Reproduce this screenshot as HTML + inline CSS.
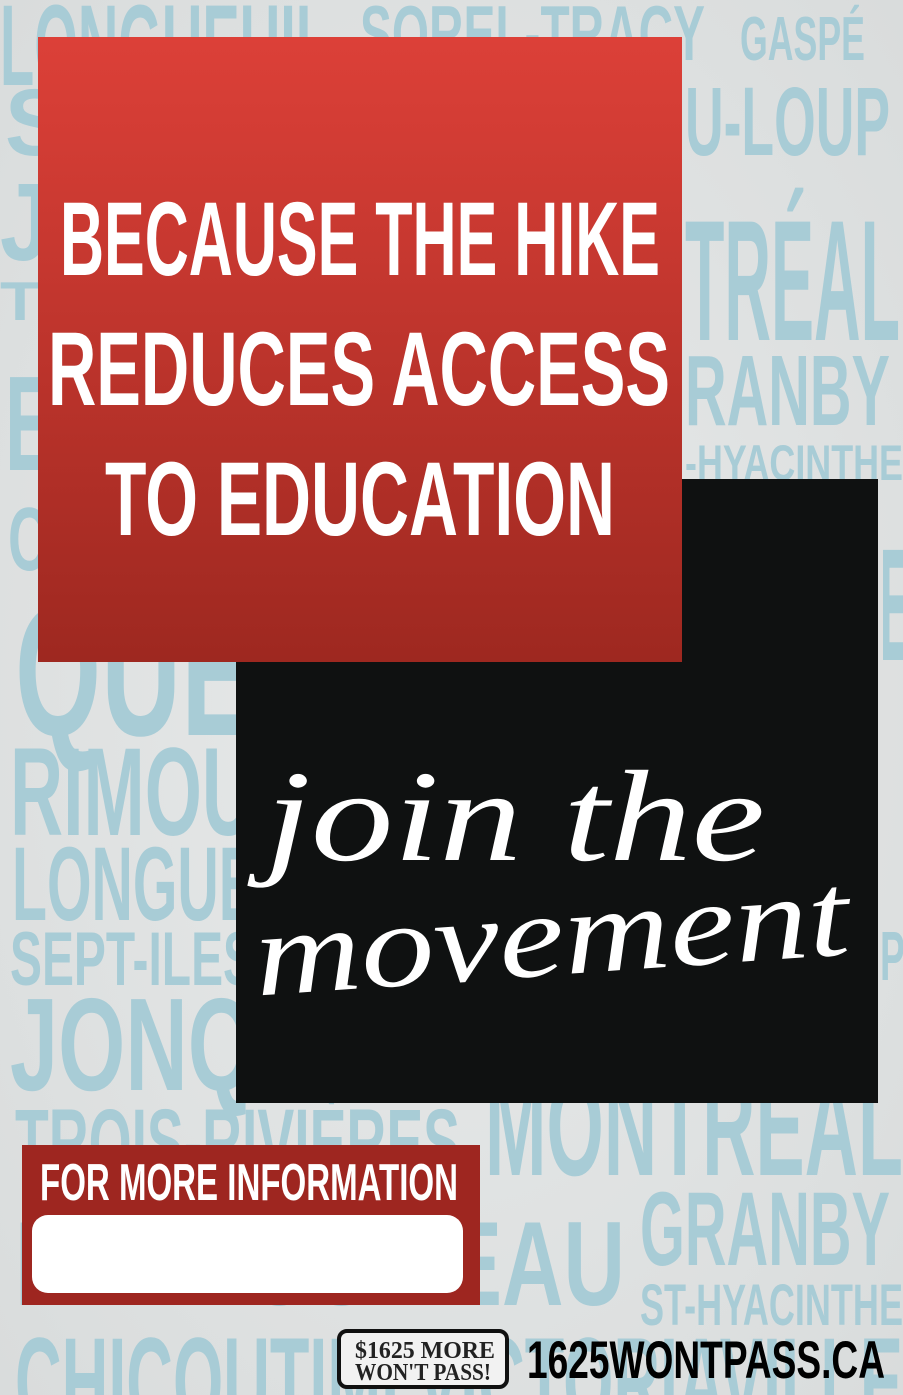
<!DOCTYPE html>
<html><head><meta charset="utf-8"><style>
html,body{margin:0;padding:0;width:903px;height:1395px;overflow:hidden;background:#e3e5e4}
svg{display:block}
.b{font-family:"Liberation Sans Narrow","Liberation Sans",sans-serif;font-weight:bold;fill:#a8ccd6}
.h{font-family:"Liberation Sans Narrow","Liberation Sans",sans-serif;font-weight:bold;fill:#fff}
</style></head><body>
<svg width="903" height="1395" viewBox="0 0 903 1395" xmlns="http://www.w3.org/2000/svg">
<defs>
<linearGradient id="rg" x1="0" y1="0" x2="0" y2="1"><stop offset="0" stop-color="#dc4038"/><stop offset="1" stop-color="#9e2820"/></linearGradient>
<radialGradient id="bgn" cx="0.5" cy="0.5" r="0.7"><stop offset="0" stop-color="#e8eaea"/><stop offset="1" stop-color="#d9dcdc"/></radialGradient>
</defs>
<rect width="903" height="1395" fill="url(#bgn)"/>
<g class="b" lengthAdjust="spacingAndGlyphs">
<text x="0" y="85" font-size="115" textLength="330" lengthAdjust="spacingAndGlyphs">LONGUEUIL</text>
<text x="360" y="60" font-size="78" textLength="345" lengthAdjust="spacingAndGlyphs">SOREL-TRACY</text>
<text x="740" y="60" font-size="62" textLength="125" lengthAdjust="spacingAndGlyphs">GASPÉ</text>
<text x="5" y="155" font-size="95" textLength="60" lengthAdjust="spacingAndGlyphs">S</text>
<text x="685" y="155" font-size="97" textLength="205" lengthAdjust="spacingAndGlyphs">U-LOUP</text>
<text x="0" y="260" font-size="110" textLength="50" lengthAdjust="spacingAndGlyphs">J</text>
<text x="0" y="320" font-size="55" textLength="40" lengthAdjust="spacingAndGlyphs">T</text>
<text x="685" y="340" font-size="172" textLength="215" lengthAdjust="spacingAndGlyphs">TRÉAL</text>
<text x="5" y="470" font-size="135" textLength="50" lengthAdjust="spacingAndGlyphs">E</text>
<text x="685" y="425" font-size="100" textLength="205" lengthAdjust="spacingAndGlyphs">RANBY</text>
<text x="685" y="480" font-size="50" textLength="218" lengthAdjust="spacingAndGlyphs">-HYACINTHE</text>
<text x="8" y="570" font-size="90" textLength="40" lengthAdjust="spacingAndGlyphs">C</text>
<text x="15" y="735" font-size="185" textLength="240" lengthAdjust="spacingAndGlyphs">QUE</text>
<text x="10" y="835" font-size="125" textLength="245" lengthAdjust="spacingAndGlyphs">RIMOU</text>
<text x="12" y="920" font-size="105" textLength="245" lengthAdjust="spacingAndGlyphs">LONGUE</text>
<text x="10" y="985" font-size="76" textLength="245" lengthAdjust="spacingAndGlyphs">SEPT-ILES</text>
<text x="10" y="1090" font-size="132" textLength="245" lengthAdjust="spacingAndGlyphs">JONQ</text>
<text x="880" y="660" font-size="160" textLength="30" lengthAdjust="spacingAndGlyphs">E</text>
<text x="880" y="980" font-size="70" textLength="25" lengthAdjust="spacingAndGlyphs">P</text>
<text x="15" y="1175" font-size="95" textLength="445" lengthAdjust="spacingAndGlyphs">TROIS-RIVIÈRES</text>
<text x="485" y="1175" font-size="142" textLength="418" lengthAdjust="spacingAndGlyphs">MONTRÉAL</text>
<text x="15" y="1305" font-size="120" textLength="610" lengthAdjust="spacingAndGlyphs">BAIE-COMEAU</text>
<text x="640" y="1265" font-size="105" textLength="250" lengthAdjust="spacingAndGlyphs">GRANBY</text>
<text x="640" y="1325" font-size="58" textLength="263" lengthAdjust="spacingAndGlyphs">ST-HYACINTHE</text>
<text x="15" y="1425" font-size="125" textLength="888" lengthAdjust="spacingAndGlyphs">CHICOUTIMI  VICTORIAVILLE</text>
</g>
<rect x="236" y="479" width="642" height="624" fill="#0f1111"/>
<rect x="38" y="37" width="644" height="625" fill="url(#rg)"/>
<g class="h">
<text x="60" y="275" font-size="105" textLength="600" lengthAdjust="spacingAndGlyphs">BECAUSE THE HIKE</text>
<text x="48" y="405" font-size="105" textLength="622" lengthAdjust="spacingAndGlyphs">REDUCES ACCESS</text>
<text x="105" y="535" font-size="105" textLength="510" lengthAdjust="spacingAndGlyphs">TO EDUCATION</text>
</g>
<g font-family="Liberation Serif, serif" font-style="italic" fill="#fff">
<text x="265" y="860" font-size="130" textLength="500" lengthAdjust="spacingAndGlyphs">join the</text>
<text x="255" y="975" font-size="120" textLength="595" lengthAdjust="spacingAndGlyphs" transform="rotate(-4 550 950)">movement</text>
</g>
<rect x="22" y="1145" width="458" height="160" fill="#9e2620"/>
<text class="h" x="40" y="1200" font-size="52" textLength="418" lengthAdjust="spacingAndGlyphs">FOR MORE INFORMATION</text>
<rect x="32" y="1215" width="431" height="78" rx="16" fill="#fff"/>
<rect x="339" y="1331" width="168" height="56" rx="8" fill="#f2f2f2" stroke="#111" stroke-width="4"/>
<g font-family="Liberation Serif, serif" font-weight="bold" fill="#222">
<text x="355" y="1358" font-size="24" textLength="140" lengthAdjust="spacingAndGlyphs">$1625 MORE</text>
<text x="355" y="1380" font-size="24" textLength="136" lengthAdjust="spacingAndGlyphs">WON'T PASS!</text>
</g>
<text x="527" y="1378" font-family="Liberation Sans Narrow, Liberation Sans, sans-serif" font-weight="bold" font-size="53" fill="#000" textLength="358" lengthAdjust="spacingAndGlyphs">1625WONTPASS.CA</text>
</svg>
</body></html>
